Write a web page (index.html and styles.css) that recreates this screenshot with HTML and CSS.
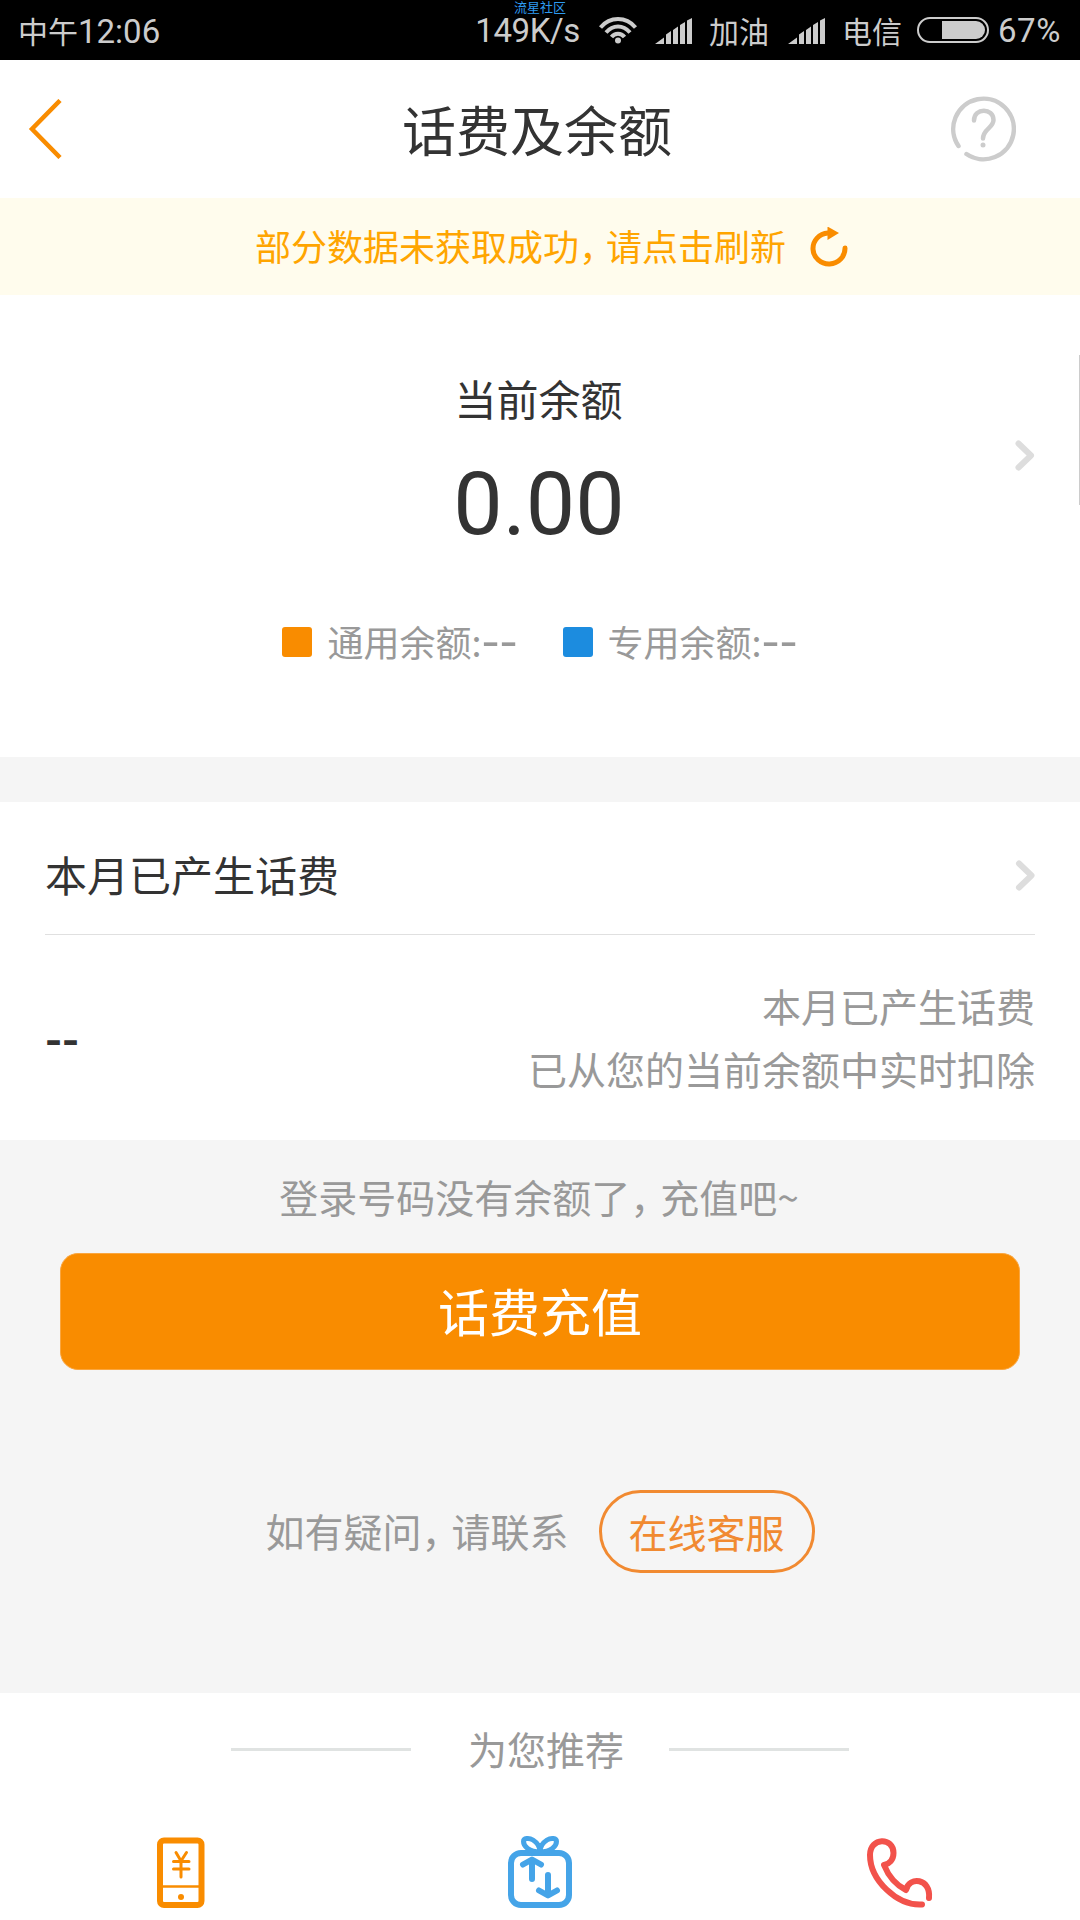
FILE: index.html
```html
<!DOCTYPE html>
<html lang="zh-CN">
  <head>
    <meta charset="UTF-8">
    <title>话费及余额</title>
    <link rel="stylesheet" href="styles.css">
  </head>
  <body>
    <div class="status-bar">
      <div class="time">中午<span class="num">12:06</span></div>
      <div class="watermark">流星社区</div>
      <div class="status-right">
        <span class="num speed">149K/s</span>
        <svg class="wifi" width="40" height="28" viewBox="0 0 40 28">
          <g fill="none" stroke="#ccc" stroke-width="4">
            <path d="M2.500 11.500C12 0.300 28 0.300 37.500 11.500" />
            <path d="M8 16.500C15 8.500 25 8.500 32 16.500" />
            <path d="M13.500 21C17 16.500 23 16.500 26.500 21" />
          </g>
          <circle cx="20" cy="24.500" r="3" fill="#ccc" />
        </svg>
        <svg class="signal" width="37" height="26" viewBox="0 0 37 26">
          <path fill="#ccc" d="M0 26L9 19.500V26zM11 26V16.500L16 13V26zM18 26V12L23 8.500V26zM25 26V7L30 4V26zM32 26V2.500L37 0V26z" />
        </svg>
        <span class="carrier">加油</span>
        <svg class="signal" width="37" height="26" viewBox="0 0 37 26">
          <path fill="#ccc" d="M0 26L9 19.500V26zM11 26V16.500L16 13V26zM18 26V12L23 8.500V26zM25 26V7L30 4V26zM32 26V2.500L37 0V26z" />
        </svg>
        <span class="carrier">电信</span>
        <svg class="battery" width="72" height="26" viewBox="0 0 72 26">
          <rect x="1" y="1" width="70" height="24" rx="12" fill="none" stroke="#ccc" stroke-width="2" />
          <path fill="#ccc" d="M25 4H59A9 9 0 0 1 59 22H25z" />
        </svg>
        <span class="num percent">67%</span>
      </div>
    </div>

    <div class="header">
      <svg class="back" width="34" height="60" viewBox="0 0 34 60">
        <path d="M32 1.500L4 30L32 58.500" fill="none" stroke="#f98c00" stroke-width="4.500" />
      </svg>
      <h1>话费及余额</h1>
      <svg class="help" width="66" height="66" viewBox="0 0 66 66" fill="none" stroke="#ccc" stroke-width="4.500" stroke-linecap="round">
        <path d="M8.500 50A30.300 30.300 0 1 1 16.500 58" />
        <path d="M24 24.500C24 11.500 43.500 11.500 43.500 24C43.500 32 33 33 33 42.500" />
        <circle cx="33" cy="49" r="2.500" fill="#ccc" stroke="none" />
      </svg>
    </div>

    <div class="notice">
      <span>部分数据未获取成功<span class="comma">，</span>请点击刷新</span>
      <svg width="40" height="40" viewBox="0 0 40 40">
        <path d="M19 6A16 15.500 0 1 0 36 21" fill="none" stroke="#f98c00" stroke-width="5" stroke-linecap="round" />
        <path d="M18.500 -0.500L30 6L18.500 13z" fill="#f98c00" />
      </svg>
    </div>

    <div class="balance">
      <div class="balance-label">当前余额</div>
      <div class="balance-amount">0.00</div>
      <div class="legend">
        <div class="legend-item"><i class="dot orange"></i>通用余额:<span class="dash">--</span></div>
        <div class="legend-item"><i class="dot blue"></i>专用余额:<span class="dash">--</span></div>
      </div>
      <svg class="balance-arrow" width="20" height="31" viewBox="0 0 20 31">
        <path d="M3.500 3.500L16 15.500L3.500 27.500" fill="none" stroke="#ddd" stroke-width="6" stroke-linecap="round" stroke-linejoin="round" />
      </svg>
      <div class="scrollbar"></div>
    </div>

    <div class="month">
      <div class="month-title">
        <span>本月已产生话费</span>
        <svg width="20" height="31" viewBox="0 0 20 31">
          <path d="M4 3.500L16.500 15.500L4 27.500" fill="none" stroke="#ddd" stroke-width="6" stroke-linecap="round" stroke-linejoin="round" />
        </svg>
      </div>
      <div class="month-body">
        <div class="month-value">--</div>
        <div class="month-desc">本月已产生话费<br>已从您的当前余额中实时扣除</div>
      </div>
    </div>

    <div class="recharge">
      <div class="hint">登录号码没有余额了<span class="comma">，</span>充值吧~</div>
      <button class="recharge-btn">话费充值</button>
      <div class="contact">
        <span>如有疑问<span class="comma">，</span>请联系</span>
        <a class="service">在线客服</a>
      </div>
    </div>

    <div class="recommend">
      <div class="recommend-title"><span>为您推荐</span></div>
      <div class="recommend-list">
        <svg width="72" height="74" viewBox="0 0 72 74" fill="none" stroke="#f98c00">
          <rect x="16" y="5.500" width="41.500" height="64.500" rx="4" stroke-width="6" />
          <path d="M16 51.500H57" stroke-width="2.500" />
          <path d="M32 17.500L37 26L42.500 17.500M37 26V42M29.500 26.500H45M29.500 34H45" stroke-width="3" stroke-linecap="round" />
          <circle cx="37" cy="62" r="3" fill="#f98c00" stroke="none" />
        </svg>
        <svg width="72" height="74" viewBox="0 0 72 74" fill="none" stroke="#45a4e8" stroke-width="6" stroke-linecap="round" stroke-linejoin="round">
          <rect x="7" y="18" width="58" height="52" rx="10" />
          <path d="M36 17C25 17 19.500 11 19.500 6.500C19.500 3 25 2.500 29 5C33 7.500 36 12 36 17C36 12 39 7.500 43 5C47 2.500 52.500 3 52.500 6.500C52.500 11 47 17 36 17" stroke-width="5" />
          <path d="M28 44V25M19 29.500L28 24.500L37 29.500M44 40V59M35 55.500L44 60.500L53 55.500" stroke-width="6" />
        </svg>
        <svg width="72" height="74" viewBox="0 0 72 74" fill="none" stroke="#f2524b" stroke-width="6" stroke-linecap="round" stroke-linejoin="round">
          <path d="M58 69.500C33 71 6 45 6 20C6 2 29.500 2 29.500 18C29.500 25 25 29 20 30C24 40 32 50 42 55C45 41 67 43 65 63" />
        </svg>
      </div>
    </div>
  </body>
</html>
```
FILE: styles.css
```css
* {
  box-sizing: border-box;
}
body {
  margin: 0;
  width: 1080px;
  height: 1920px;
  overflow: hidden;
  background-color: #fff;
  color: #333;
  font-family: "Noto Sans CJK SC", sans-serif;
}
svg {
  display: block;
  flex-shrink: 0;
}
.comma {
  letter-spacing: -9px;
}

/* status bar */
.status-bar {
  position: relative;
  height: 60px;
  padding: 0 19px 0 18px;
  display: flex;
  justify-content: space-between;
  background-color: #000;
  color: #ccc;
  font-size: 30px;
  line-height: 60px;
  white-space: nowrap;
}
.num {
  font-family: Roboto, sans-serif;
  font-size: 33px;
  line-height: 62px;
}
.speed {
  letter-spacing: -0.4px;
}
.percent {
  letter-spacing: 0.6px;
}
.watermark {
  position: absolute;
  left: 514px;
  top: 0;
  font-size: 13px;
  line-height: 13px;
  color: #2e9bf0;
}
.status-right {
  display: flex;
}
.wifi {
  margin: 16px 17px 0 18px;
}
.signal {
  margin-top: 18px;
}
.carrier {
  margin: 0 19px 0 17px;
}
.carrier + .battery {
  margin: 17px 9px 0 -4px;
}

/* header */
.header {
  height: 138px;
  padding: 0 64px 0 28px;
  display: flex;
  align-items: center;
  justify-content: space-between;
}
.header h1 {
  margin: 0 0 0 62px;
  font-size: 54px;
  line-height: 80px;
  font-weight: normal;
}
.notice {
  height: 97px;
  padding-left: 255px;
  display: flex;
  align-items: center;
  background-color: #fffced;
  color: #ffa500;
  font-size: 36px;
}
.notice > span {
  margin-bottom: 3px;
}
.notice svg {
  margin-left: 23px;
}

/* balance */
.balance {
  position: relative;
  height: 462px;
  padding-top: 73px;
  text-align: center;
}
.balance-label {
  padding-right: 3px;
  font-size: 42px;
  line-height: 60px;
}
.balance-amount {
  margin-top: 24px;
  padding-right: 2px;
  font-family: Roboto, sans-serif;
  font-size: 88px;
  line-height: 104px;
}
.legend {
  margin-top: 62px;
  display: flex;
  justify-content: center;
  gap: 45px;
  color: #999;
  font-size: 36px;
  line-height: 47px;
}
.legend-item {
  display: flex;
}
.dot {
  width: 30px;
  height: 30px;
  margin: 9px 15px 0 0;
  border-radius: 3px;
}
.orange {
  background-color: #f98c00;
}
.blue {
  background-color: #1c8cdf;
}
.dash {
  font-size: 52px;
  line-height: 37px;
}
.balance-arrow {
  position: absolute;
  right: 45px;
  top: 145px;
}
.scrollbar {
  position: absolute;
  right: 0;
  top: 60px;
  width: 1px;
  height: 150px;
  background-color: #ccc;
}

/* month */
.month {
  height: 383px;
  padding: 0 45px;
  border-top: 45px solid #f5f5f5;
}
.month-title {
  height: 133px;
  padding-top: 11px;
  display: flex;
  align-items: center;
  justify-content: space-between;
  border-bottom: 1px solid #e0e0e0;
  font-size: 42px;
}
.month-title svg {
  margin-top: 4px;
}
.month-body {
  padding-top: 39px;
  display: flex;
  justify-content: space-between;
}
.month-value {
  font-size: 46px;
  font-weight: bold;
  line-height: 124px;
}
.month-desc {
  color: #999;
  font-size: 39px;
  line-height: 62.5px;
  text-align: right;
}

/* recharge */
.recharge {
  height: 553px;
  padding: 26px 60px 0;
  background-color: #f5f5f5;
  color: #999;
  font-size: 39px;
  text-align: center;
}
.hint {
  padding-right: 2px;
  line-height: 60px;
}
.recharge-btn {
  display: block;
  width: 960px;
  height: 117px;
  margin-top: 27px;
  padding: 0 0 4px;
  border: 1px solid #faa63f;
  border-radius: 18px;
  background-color: #f98c00;
  color: #fff;
  font-family: inherit;
  font-size: 51px;
}
.contact {
  margin-top: 120px;
  display: flex;
  align-items: center;
  justify-content: center;
  gap: 30px;
}
.contact > span {
  margin-bottom: 3px;
}
.service {
  width: 216px;
  height: 83px;
  border: 3px solid #f18a31;
  border-radius: 42px;
  color: #f18a31;
  line-height: 76px;
}

/* recommend */
.recommend-title {
  height: 113px;
  padding: 0 231px;
  display: flex;
  align-items: center;
  justify-content: space-between;
  color: #999;
  font-size: 39px;
}
.recommend-title::before,
.recommend-title::after {
  content: "";
  width: 180px;
  height: 3px;
  background-color: #e0e3e2;
}
.recommend-title span {
  margin: 0 0 4px 12px;
}
.recommend-list {
  padding-top: 29px;
  display: flex;
  justify-content: space-around;
}
```
